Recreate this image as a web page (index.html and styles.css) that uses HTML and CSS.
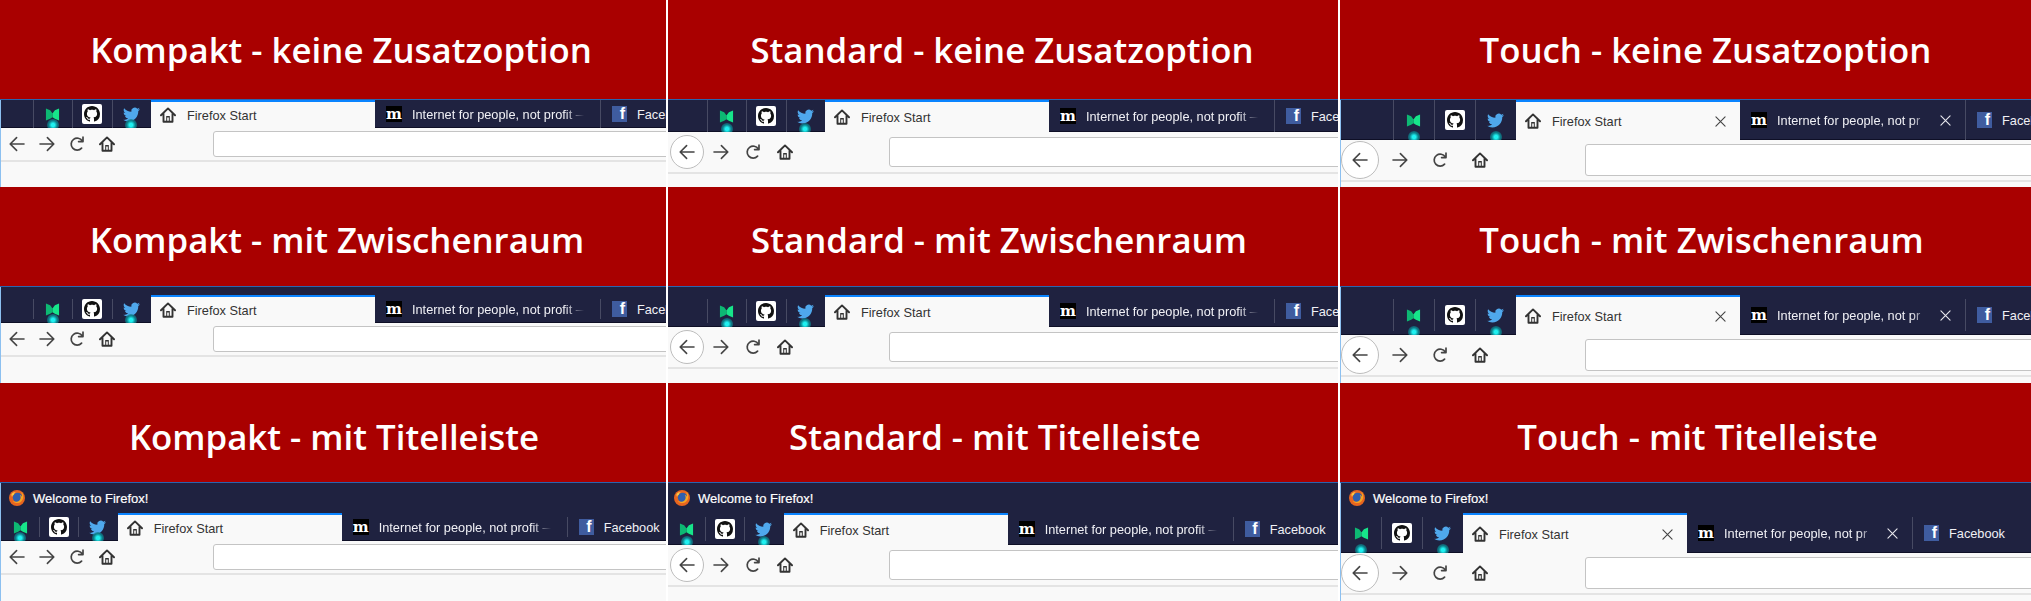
FILE: index.html
```html
<!DOCTYPE html>
<html lang="de">
<head>
  <meta charset="UTF-8">
  <title>Firefox Dichte und Titelleiste</title>
  <link rel="stylesheet" href="styles.css">
</head>
<body>
  <!-- gemeinsame Icons -->
  <svg class="defs" width="0" height="0" aria-hidden="true">
    <symbol id="i-medium" viewBox="0 0 16 16">
      <polygon points="1,1.500 5.500,3.500 8,7 8,11 5.500,12.500 1,14.500" fill="#0db873"/>
      <polygon points="15,1.500 10.500,3.500 8,7 8,11 10.500,12.500 15,14.500" fill="#17e58a"/>
    </symbol>
    <symbol id="i-github" viewBox="0 0 16 16">
      <path fill="#111" d="M8 0C3.58 0 0 3.58 0 8c0 3.54 2.29 6.53 5.47 7.59.4.07.55-.17.55-.38 0-.19-.01-.82-.01-1.49-2.01.37-2.53-.49-2.69-.94-.09-.23-.48-.94-.82-1.13-.28-.15-.68-.52-.01-.53.63-.01 1.08.58 1.23.82.72 1.21 1.87.87 2.33.66.07-.52.28-.87.51-1.07-1.78-.2-3.64-.89-3.64-3.95 0-.87.31-1.59.82-2.15-.08-.2-.36-1.02.08-2.12 0 0 .67-.21 2.2.82.64-.18 1.32-.27 2-.27.68 0 1.36.09 2 .27 1.53-1.04 2.2-.82 2.2-.82.44 1.1.16 1.92.08 2.12.51.56.82 1.27.82 2.15 0 3.07-1.87 3.75-3.65 3.95.29.25.54.73.54 1.48 0 1.07-.01 1.93-.01 2.2 0 .21.15.46.55.38A8.013 8.013 0 0016 8c0-4.42-3.58-8-8-8z"/>
    </symbol>
    <symbol id="i-twitter" viewBox="0 0 24 24">
      <path fill="#4fa8ec" d="M23.953 4.57a10 10 0 01-2.825.775 4.958 4.958 0 002.163-2.723c-.951.555-2.005.959-3.127 1.184a4.92 4.92 0 00-8.384 4.482C7.69 8.095 4.067 6.13 1.64 3.162a4.822 4.822 0 00-.666 2.475c0 1.71.87 3.213 2.188 4.096a4.904 4.904 0 01-2.228-.616v.06a4.923 4.923 0 003.946 4.827 4.996 4.996 0 01-2.212.085 4.936 4.936 0 004.604 3.417 9.867 9.867 0 01-6.102 2.105c-.39 0-.779-.023-1.17-.067a13.995 13.995 0 007.557 2.209c9.053 0 13.998-7.496 13.998-13.985 0-.21 0-.42-.015-.63A9.935 9.935 0 0024 4.59z"/>
    </symbol>
    <symbol id="i-home" viewBox="0 0 16 16">
      <path fill="none" stroke="#333" stroke-width="1.9" stroke-linejoin="round" stroke-linecap="round" d="M1 8.300 8 1.400l7 6.900M3.500 6.500v8.300h9V6.500"/>
      <path fill="#333" d="M6.200 9h3.600v5.800H8.800v-4.200H7.200v4.200h-1z"/>
    </symbol>
    <symbol id="i-back" viewBox="0 0 16 16">
      <path fill="none" stroke="#444" stroke-width="1.6" stroke-linecap="round" stroke-linejoin="round" d="M15 8H1.400M7.600 1.600 1.200 8l6.400 6.400"/>
    </symbol>
    <symbol id="i-forward" viewBox="0 0 16 16">
      <path fill="none" stroke="#444" stroke-width="1.6" stroke-linecap="round" stroke-linejoin="round" d="M1 8h13.600M8.400 1.600 14.800 8l-6.400 6.400"/>
    </symbol>
    <symbol id="i-reload" viewBox="0 0 16 16">
      <path fill="none" stroke="#444" stroke-width="1.7" stroke-linecap="round" stroke-linejoin="round" d="M12.600 12.200A6 6 0 1 1 13.300 5M14 1.200v4.400H9.600"/>
    </symbol>
    <symbol id="i-close" viewBox="0 0 12 12">
      <path fill="none" stroke="currentColor" stroke-width="1.200" stroke-linecap="round" d="M1 1l10 10M11 1 1 11"/>
    </symbol>
    <symbol id="i-firefox" viewBox="0 0 16 16">
      <circle cx="8" cy="8" r="8" fill="#e8651f"/>
      <circle cx="8.600" cy="7.600" r="4.800" fill="#2f5fae"/>
      <path fill="#f6a623" d="M13 2.600c2 2.600 1.700 6.600-.8 8.900-2.400 2.200-6.400 2.100-8.500-.5 2 1.200 5.200 1.200 6.900-.7 1.500-1.600 1.300-4 .2-5.300 1.200.3 1.900 1.100 2.200 1.800 0-1.700-.1-3-.9-4.200z"/>
      <path fill="#f7c948" d="M2.500 4C3.600 2.500 5.400 1.700 7 2 5.600 2.600 5 3.600 4.900 4.700 4 5 3.200 5.800 3.100 7.100 2.500 6.200 2.300 5 2.500 4z"/>
    </symbol>
  </svg>

  <main class="sheet">

    <!-- Zeile 1: keine Zusatzoption -->
    <section class="cell compact plain shift-a">
      <h2 class="banner">Kompakt - keine Zusatzoption</h2>
      <div class="browser edge">
        <div class="tabs">
          <div class="pin dot"><svg class="ic-medium"><use href="#i-medium"/></svg></div>
          <div class="pin"><span class="gh"><svg><use href="#i-github"/></svg></span></div>
          <div class="pin dot"><svg class="ic-twitter"><use href="#i-twitter"/></svg></div>
          <div class="tab active"><svg class="ic"><use href="#i-home"/></svg><span class="label">Firefox Start</span></div>
          <div class="tab"><span class="fav-m">m</span><span class="label fade">Internet for people, not profit —</span></div>
          <div class="tab split"><span class="fav-f">f</span><span class="label">Facebook</span></div>
        </div>
        <div class="toolbar">
          <span class="back"><svg class="ic"><use href="#i-back"/></svg></span>
          <svg class="ic"><use href="#i-forward"/></svg>
          <svg class="ic"><use href="#i-reload"/></svg>
          <svg class="ic"><use href="#i-home"/></svg>
          <div class="url"></div>
        </div>
      </div>
    </section>

    <section class="cell standard plain shift-b">
      <h2 class="banner">Standard - keine Zusatzoption</h2>
      <div class="browser">
        <div class="tabs">
          <div class="pin dot"><svg class="ic-medium"><use href="#i-medium"/></svg></div>
          <div class="pin"><span class="gh"><svg><use href="#i-github"/></svg></span></div>
          <div class="pin dot"><svg class="ic-twitter"><use href="#i-twitter"/></svg></div>
          <div class="tab active"><svg class="ic"><use href="#i-home"/></svg><span class="label">Firefox Start</span></div>
          <div class="tab"><span class="fav-m">m</span><span class="label fade">Internet for people, not profit —</span></div>
          <div class="tab split"><span class="fav-f">f</span><span class="label">Facebook</span></div>
        </div>
        <div class="toolbar">
          <span class="back"><svg class="ic"><use href="#i-back"/></svg></span>
          <svg class="ic"><use href="#i-forward"/></svg>
          <svg class="ic"><use href="#i-reload"/></svg>
          <svg class="ic"><use href="#i-home"/></svg>
          <div class="url"></div>
        </div>
      </div>
    </section>

    <section class="cell touch plain shift-c">
      <h2 class="banner">Touch - keine Zusatzoption</h2>
      <div class="browser edge">
        <div class="tabs">
          <div class="pin dot"><svg class="ic-medium"><use href="#i-medium"/></svg></div>
          <div class="pin"><span class="gh"><svg><use href="#i-github"/></svg></span></div>
          <div class="pin dot"><svg class="ic-twitter"><use href="#i-twitter"/></svg></div>
          <div class="tab active"><svg class="ic"><use href="#i-home"/></svg><span class="label">Firefox Start</span><svg class="close"><use href="#i-close"/></svg></div>
          <div class="tab"><span class="fav-m">m</span><span class="label fade">Internet for people, not pr</span><svg class="close"><use href="#i-close"/></svg></div>
          <div class="tab split"><span class="fav-f">f</span><span class="label">Facebook</span></div>
        </div>
        <div class="toolbar">
          <span class="back"><svg class="ic"><use href="#i-back"/></svg></span>
          <svg class="ic"><use href="#i-forward"/></svg>
          <svg class="ic"><use href="#i-reload"/></svg>
          <svg class="ic"><use href="#i-home"/></svg>
          <div class="url"></div>
        </div>
      </div>
    </section>

    <!-- Zeile 2: mit Zwischenraum -->
    <section class="cell compact spaced shift-a">
      <h2 class="banner">Kompakt - mit Zwischenraum</h2>
      <div class="browser edge">
        <div class="tabs">
          <div class="pin dot"><svg class="ic-medium"><use href="#i-medium"/></svg></div>
          <div class="pin"><span class="gh"><svg><use href="#i-github"/></svg></span></div>
          <div class="pin dot"><svg class="ic-twitter"><use href="#i-twitter"/></svg></div>
          <div class="tab active"><svg class="ic"><use href="#i-home"/></svg><span class="label">Firefox Start</span></div>
          <div class="tab"><span class="fav-m">m</span><span class="label fade">Internet for people, not profit —</span></div>
          <div class="tab split"><span class="fav-f">f</span><span class="label">Facebook</span></div>
        </div>
        <div class="toolbar">
          <span class="back"><svg class="ic"><use href="#i-back"/></svg></span>
          <svg class="ic"><use href="#i-forward"/></svg>
          <svg class="ic"><use href="#i-reload"/></svg>
          <svg class="ic"><use href="#i-home"/></svg>
          <div class="url"></div>
        </div>
      </div>
    </section>

    <section class="cell standard spaced shift-b">
      <h2 class="banner">Standard - mit Zwischenraum</h2>
      <div class="browser">
        <div class="tabs">
          <div class="pin dot"><svg class="ic-medium"><use href="#i-medium"/></svg></div>
          <div class="pin"><span class="gh"><svg><use href="#i-github"/></svg></span></div>
          <div class="pin dot"><svg class="ic-twitter"><use href="#i-twitter"/></svg></div>
          <div class="tab active"><svg class="ic"><use href="#i-home"/></svg><span class="label">Firefox Start</span></div>
          <div class="tab"><span class="fav-m">m</span><span class="label fade">Internet for people, not profit —</span></div>
          <div class="tab split"><span class="fav-f">f</span><span class="label">Facebook</span></div>
        </div>
        <div class="toolbar">
          <span class="back"><svg class="ic"><use href="#i-back"/></svg></span>
          <svg class="ic"><use href="#i-forward"/></svg>
          <svg class="ic"><use href="#i-reload"/></svg>
          <svg class="ic"><use href="#i-home"/></svg>
          <div class="url"></div>
        </div>
      </div>
    </section>

    <section class="cell touch spaced shift-c">
      <h2 class="banner">Touch - mit Zwischenraum</h2>
      <div class="browser edge">
        <div class="tabs">
          <div class="pin dot"><svg class="ic-medium"><use href="#i-medium"/></svg></div>
          <div class="pin"><span class="gh"><svg><use href="#i-github"/></svg></span></div>
          <div class="pin dot"><svg class="ic-twitter"><use href="#i-twitter"/></svg></div>
          <div class="tab active"><svg class="ic"><use href="#i-home"/></svg><span class="label">Firefox Start</span><svg class="close"><use href="#i-close"/></svg></div>
          <div class="tab"><span class="fav-m">m</span><span class="label fade">Internet for people, not pr</span><svg class="close"><use href="#i-close"/></svg></div>
          <div class="tab split"><span class="fav-f">f</span><span class="label">Facebook</span></div>
        </div>
        <div class="toolbar">
          <span class="back"><svg class="ic"><use href="#i-back"/></svg></span>
          <svg class="ic"><use href="#i-forward"/></svg>
          <svg class="ic"><use href="#i-reload"/></svg>
          <svg class="ic"><use href="#i-home"/></svg>
          <div class="url"></div>
        </div>
      </div>
    </section>

    <!-- Zeile 3: mit Titelleiste -->
    <section class="cell compact titled shift-a">
      <h2 class="banner">Kompakt - mit Titelleiste</h2>
      <div class="browser edge">
        <div class="titlebar"><svg class="ic"><use href="#i-firefox"/></svg><span>Welcome to Firefox!</span></div>
        <div class="tabs">
          <div class="pin dot"><svg class="ic-medium"><use href="#i-medium"/></svg></div>
          <div class="pin"><span class="gh"><svg><use href="#i-github"/></svg></span></div>
          <div class="pin dot"><svg class="ic-twitter"><use href="#i-twitter"/></svg></div>
          <div class="tab active"><svg class="ic"><use href="#i-home"/></svg><span class="label">Firefox Start</span></div>
          <div class="tab"><span class="fav-m">m</span><span class="label fade">Internet for people, not profit —</span></div>
          <div class="tab split"><span class="fav-f">f</span><span class="label">Facebook</span></div>
        </div>
        <div class="toolbar">
          <span class="back"><svg class="ic"><use href="#i-back"/></svg></span>
          <svg class="ic"><use href="#i-forward"/></svg>
          <svg class="ic"><use href="#i-reload"/></svg>
          <svg class="ic"><use href="#i-home"/></svg>
          <div class="url"></div>
        </div>
      </div>
    </section>

    <section class="cell standard titled shift-b">
      <h2 class="banner">Standard - mit Titelleiste</h2>
      <div class="browser">
        <div class="titlebar"><svg class="ic"><use href="#i-firefox"/></svg><span>Welcome to Firefox!</span></div>
        <div class="tabs">
          <div class="pin dot"><svg class="ic-medium"><use href="#i-medium"/></svg></div>
          <div class="pin"><span class="gh"><svg><use href="#i-github"/></svg></span></div>
          <div class="pin dot"><svg class="ic-twitter"><use href="#i-twitter"/></svg></div>
          <div class="tab active"><svg class="ic"><use href="#i-home"/></svg><span class="label">Firefox Start</span></div>
          <div class="tab"><span class="fav-m">m</span><span class="label fade">Internet for people, not profit —</span></div>
          <div class="tab split"><span class="fav-f">f</span><span class="label">Facebook</span></div>
        </div>
        <div class="toolbar">
          <span class="back"><svg class="ic"><use href="#i-back"/></svg></span>
          <svg class="ic"><use href="#i-forward"/></svg>
          <svg class="ic"><use href="#i-reload"/></svg>
          <svg class="ic"><use href="#i-home"/></svg>
          <div class="url"></div>
        </div>
      </div>
    </section>

    <section class="cell touch titled shift-c">
      <h2 class="banner">Touch - mit Titelleiste</h2>
      <div class="browser edge">
        <div class="titlebar"><svg class="ic"><use href="#i-firefox"/></svg><span>Welcome to Firefox!</span></div>
        <div class="tabs">
          <div class="pin dot"><svg class="ic-medium"><use href="#i-medium"/></svg></div>
          <div class="pin"><span class="gh"><svg><use href="#i-github"/></svg></span></div>
          <div class="pin dot"><svg class="ic-twitter"><use href="#i-twitter"/></svg></div>
          <div class="tab active"><svg class="ic"><use href="#i-home"/></svg><span class="label">Firefox Start</span><svg class="close"><use href="#i-close"/></svg></div>
          <div class="tab"><span class="fav-m">m</span><span class="label fade">Internet for people, not pr</span><svg class="close"><use href="#i-close"/></svg></div>
          <div class="tab split"><span class="fav-f">f</span><span class="label">Facebook</span></div>
        </div>
        <div class="toolbar">
          <span class="back"><svg class="ic"><use href="#i-back"/></svg></span>
          <svg class="ic"><use href="#i-forward"/></svg>
          <svg class="ic"><use href="#i-reload"/></svg>
          <svg class="ic"><use href="#i-home"/></svg>
          <div class="url"></div>
        </div>
      </div>
    </section>

  </main>
</body>
</html>
```
FILE: styles.css
```css
/* Seite */
html, body {
  margin: 0;
  padding: 0;
  background: #fff;
  overflow: hidden;
  font-family: "Liberation Sans", Arial, sans-serif;
}

.defs {
  position: absolute;
}

.sheet {
  display: grid;
  grid-template-columns: 666px 670px 691px;
  grid-template-rows: 187px 196px 218px;
  column-gap: 2px;
  width: 2031px;
  height: 601px;
}

/* Dichte-Varianten */
.compact {
  --bar: 28px;
  --tool: 32px;
  --pin: 39.33px;
  --lead: 32px;
  --first: 38px;
  --url: 26px;
  --url-gap: 98px;
  --tool-gap: 14px;
  --tool-pad: 8px;
  --back: 16px;
  --back-gap: 0px;
}

.standard {
  --bar: 32px;
  --tool: 40px;
  --pin: 39.33px;
  --lead: 39px;
  --first: 37px;
  --url: 30px;
  --url-gap: 96px;
  --tool-gap: 16px;
  --tool-pad: 2px;
  --back: 34px;
  --back-gap: -7px;
}

.touch {
  --bar: 40px;
  --tool: 40px;
  --pin: 41px;
  --lead: 52px;
  --first: 40px;
  --url: 32px;
  --url-gap: 97px;
  --tool-gap: 24px;
  --tool-pad: 0px;
  --back: 38px;
  --back-gap: -11px;
}

.cell {
  min-width: 0;
  display: flex;
  flex-direction: column;
  overflow: hidden;
}

/* Roter Kopf */
.banner {
  flex: none;
  box-sizing: border-box;
  height: 100px;
  margin: 0;
  display: flex;
  align-items: center;
  justify-content: center;
  background: #a90000;
  border-bottom: 1px solid #2a64ae;
  color: #fff;
  font-family: "Open Sans", sans-serif;
  font-size: 34.8px;
  font-weight: 600;
  white-space: nowrap;
}

.shift-a.plain .banner { padding-left: 16px; }
.shift-a.spaced .banner { padding-left: 8px; }
.shift-a.titled .banner { padding-left: 2px; }
.shift-b.plain .banner { padding-right: 2px; }
.shift-b.spaced .banner { padding-right: 8px; }
.shift-b.titled .banner { padding-right: 16px; }
.shift-c.plain .banner { padding-left: 40px; }
.shift-c.spaced .banner { padding-left: 32px; }
.shift-c.titled .banner { padding-left: 24px; }

.spaced .banner { padding-top: 5px; }
.titled .banner { padding-top: 8px; }

/* Browserfenster */
.browser {
  flex: 1;
  background: #f9f9f9;
}

.browser.edge {
  border-left: 1px solid #8cc0f0;
}

.titlebar {
  height: 30px;
  display: flex;
  align-items: center;
  gap: 8px;
  padding-left: 8px;
  background: #1f2240;
  color: #fff;
  font-size: 13px;
  -webkit-text-stroke: 0.2px #fff;
}

.shift-b .titlebar { padding-left: 6px; }

/* Tableiste */
.tabs {
  display: flex;
  height: var(--bar);
  padding-left: var(--lead);
  background: #1f2240;
  box-shadow: inset 0 -1px 0 #0e0f26;
  --rule: 0px;
}

.spaced .tabs {
  padding-top: 8px;
  --rule: 4px;
}

.titled .tabs {
  padding-left: 0;
  --rule: 4px;
}

.pin {
  flex: none;
  position: relative;
  overflow: hidden;
  width: var(--pin);
  display: flex;
  align-items: center;
  justify-content: center;
  background: linear-gradient(#474a63, #474a63) left var(--rule) / 1px calc(100% - 2 * var(--rule)) no-repeat;
}

.titled .pin:first-child {
  width: var(--first);
  background: none;
}

.pin svg {
  display: block;
}

.ic-medium {
  width: 15px;
  height: 15px;
}

.ic-twitter {
  width: 17px;
  height: 17px;
}

.gh {
  width: 20px;
  height: 20px;
  display: flex;
  align-items: center;
  justify-content: center;
  background: #fff;
  border-radius: 2px;
}

.gh svg {
  width: 16px;
  height: 16px;
}

/* Kleiner Punkt unter angepinnten Tabs */
.dot::after {
  content: "";
  position: absolute;
  left: 50%;
  bottom: -3px;
  width: 12px;
  height: 12px;
  margin-left: -6px;
  border-radius: 50%;
  background: radial-gradient(circle, #1ff0f0 0 20%, #0d7f8a 50%, rgba(15, 100, 120, 0.1) 100%);
}

.tab {
  flex: none;
  box-sizing: border-box;
  width: 225px;
  display: flex;
  align-items: center;
  gap: 10px;
  padding: 0 14px 0 11px;
  color: #f0f0f5;
  font-size: 12.75px;
  white-space: nowrap;
}

.tab.active {
  width: 224px;
  padding-left: 9px;
  background: #f9f9f9;
  border-top: 2px solid #0a84ff;
  color: #333;
  gap: 11px;
}

.tab.split {
  background: linear-gradient(#474a63, #474a63) left var(--rule) / 1px calc(100% - 2 * var(--rule)) no-repeat;
  padding-left: 12px;
}

.label {
  flex: none;
}

.label.fade {
  flex: 1;
  min-width: 0;
  -webkit-mask-image: linear-gradient(to right, #000 88%, transparent 99%);
  mask-image: linear-gradient(to right, #000 88%, transparent 99%);
}

.active .label {
  flex: 1;
}

.ic {
  flex: none;
  width: 16px;
  height: 16px;
}

.close {
  flex: none;
  width: 11px;
  height: 11px;
  color: #e8e8ee;
}

.active .close {
  color: #444;
}

.fav-m {
  flex: none;
  width: 16px;
  height: 16px;
  display: flex;
  align-items: center;
  justify-content: center;
  background: #000;
  color: #fff;
  font-family: "DejaVu Serif", serif;
  font-size: 15px;
  font-weight: 700;
  line-height: 16px;
}

.fav-f {
  flex: none;
  box-sizing: border-box;
  width: 15px;
  height: 16px;
  padding-right: 2px;
  display: flex;
  align-items: flex-end;
  justify-content: flex-end;
  background: #3f5c9f;
  color: #fff;
  font-size: 16px;
  font-weight: 700;
  line-height: 16px;
}

/* Navigationsleiste */
.toolbar {
  height: var(--tool);
  display: flex;
  align-items: center;
  gap: var(--tool-gap);
  padding-left: var(--tool-pad);
  border-bottom: 2px solid #e4e4e4;
}

.back {
  flex: none;
  box-sizing: border-box;
  width: var(--back);
  height: var(--back);
  margin-right: var(--back-gap);
  display: flex;
  align-items: center;
  justify-content: center;
}

.standard .back,
.touch .back {
  background: #fff;
  border: 1px solid #bdbdbd;
  border-radius: 50%;
}

.url {
  flex: 1;
  box-sizing: border-box;
  height: var(--url);
  margin-left: calc(var(--url-gap) - var(--tool-gap));
  margin-right: -6px;
  background: #fff;
  border: 1px solid #c4c4c4;
  border-radius: 3px;
}
```
